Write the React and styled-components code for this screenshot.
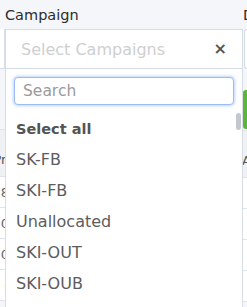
import React from "react"
import styled, { createGlobalStyle } from "styled-components"

const GlobalStyle = createGlobalStyle`
  html, body {
    margin: 0;
    padding: 0;
    background: #f5f6fa;
  }
  * {
    box-sizing: border-box;
  }
`

const font = `"DejaVu Sans", "Liberation Sans", sans-serif`

const Page = styled.div`
  width: 247px;
  height: 307px;
  overflow: hidden;
  display: grid;
  grid-template-columns: 5px 238px 4px;
  align-items: start;
  font-family: ${font};
  background: #f5f6fa;
`

const Column = styled.div`
  display: flex;
  flex-direction: column;
  min-width: 0;
  overflow: hidden;
`

const Label = styled.div`
  height: 29px;
  display: flex;
  align-items: center;
  padding-top: 1px;
  font-size: 14.5px;
  color: #2c2c2c;
  white-space: nowrap;
`

const SideBox = styled.div`
  height: 40px;
  background: #fff;
  border: 1px solid #d7dde6;
  border-left: ${(p) => (p.$side === "left" ? "none" : "1px solid #d7dde6")};
  border-right: ${(p) => (p.$side === "left" ? "1px solid #d7dde6" : "none")};
  border-top: ${(p) => (p.$side === "left" ? "none" : "1px solid #d7dde6")};
  border-radius: ${(p) => (p.$side === "left" ? "0" : "4px 0 0 4px")};
  margin-left: ${(p) => (p.$side === "left" ? "0" : "1px")};
`

const Spacer = styled.div`
  height: ${(p) => p.$h}px;
`

const GreenButton = styled.div`
  height: 39px;
  background: #5bb63b;
  border-radius: 3px 0 0 3px;
`

const TableHead = styled.div`
  height: 48px;
  background: #eff1f5;
  border-top: 1px solid #dfe3ea;
  border-bottom: 1px solid #dfe3ea;
  display: flex;
  align-items: flex-end;
  padding-bottom: 9px;
  justify-content: ${(p) => (p.$side === "left" ? "flex-end" : "flex-start")};
  font-size: 13px;
  color: #555;
  white-space: nowrap;
`

const TableRow = styled.div`
  height: ${(p) => p.$h || 31}px;
  background: #fff;
  border-bottom: 1px solid #dfe3ea;
  display: flex;
  align-items: center;
  justify-content: ${(p) => (p.$side === "left" ? "flex-end" : "flex-start")};
  font-size: 13px;
  color: #666;
  white-space: nowrap;
`

const Clip = styled.span`
  margin-right: ${(p) => p.$mr || 0}px;
  margin-left: ${(p) => p.$ml || 0}px;
`

const Select = styled.div`
  height: 40px;
  background: #fff;
  border: 1px solid #d7dde6;
  display: flex;
  align-items: center;
  justify-content: space-between;
  padding: 0 15px 0 15px;
`

const Placeholder = styled.span`
  font-size: 16px;
  color: #cfcfcf;
`

const Clear = styled.span`
  font-size: 16px;
  font-weight: bold;
  color: #555;
  line-height: 1;
`

const Panel = styled.div`
  background: #fff;
  border: 1px solid #d7dde6;
  border-top: none;
  padding: 8px 8px 0 8px;
  height: 260px;
`

const SearchInput = styled.input`
  display: block;
  width: 100%;
  height: 28px;
  border: 1px solid #9dbcf3;
  border-radius: 4px;
  box-shadow: 0 0 3px 1px rgba(110, 160, 245, 0.45);
  padding: 0 8px;
  font-family: ${font};
  font-size: 15.5px;
  color: #555;
  outline: none;
  &::placeholder {
    color: #9a9a9a;
  }
`

const ListArea = styled.div`
  display: flex;
  margin: 8px -8px 0 -8px;
`

const Items = styled.div`
  flex: 1;
  display: flex;
  flex-direction: column;
`

const Item = styled.div`
  height: 31px;
  display: flex;
  align-items: center;
  padding-left: 10px;
  font-size: ${(p) => (p.$bold ? "14.5px" : "16px")};
  font-weight: ${(p) => (p.$bold ? "bold" : "normal")};
  color: ${(p) => (p.$bold ? "#545454" : "#5c5c5c")};
  white-space: nowrap;
`

const Track = styled.div`
  width: 6px;
  padding-right: 1px;
`

const Thumb = styled.div`
  width: 5px;
  height: 17px;
  border-radius: 3px;
  background: #c3c8cf;
`

const campaigns = ["SK-FB", "SKI-FB", "Unallocated", "SKI-OUT", "SKI-OUB"]
const leftCells = ["18", "0", "0", "("]

export default function App() {
  return (
    <>
      <GlobalStyle />
      <Page>
        <Column>
          <Label />
          <SideBox $side="left" />
          <Spacer $h={60} />
          <TableHead $side="left">
            <Clip $mr={-5}>Pri</Clip>
          </TableHead>
          {leftCells.map((c, i) => (
            <TableRow key={i} $side="left">
              <Clip $mr={-4}>{c}</Clip>
            </TableRow>
          ))}
        </Column>

        <Column>
          <Label>Campaign</Label>
          <Select>
            <Placeholder>Select Campaigns</Placeholder>
            <Clear>×</Clear>
          </Select>
          <Panel>
            <SearchInput placeholder="Search" readOnly />
            <ListArea>
              <Items>
                <Item $bold>Select all</Item>
                {campaigns.map((c) => (
                  <Item key={c}>{c}</Item>
                ))}
              </Items>
              <Track>
                <Thumb />
              </Track>
            </ListArea>
          </Panel>
        </Column>

        <Column>
          <Label>Date</Label>
          <SideBox $side="right" />
          <Spacer $h={21} />
          <GreenButton />
          <Spacer $h={1} />
          <TableHead $side="right">
            <Clip $ml={-1}>Ad</Clip>
          </TableHead>
          {leftCells.map((c, i) => (
            <TableRow key={i} $side="right" />
          ))}
        </Column>
      </Page>
    </>
  )
}
